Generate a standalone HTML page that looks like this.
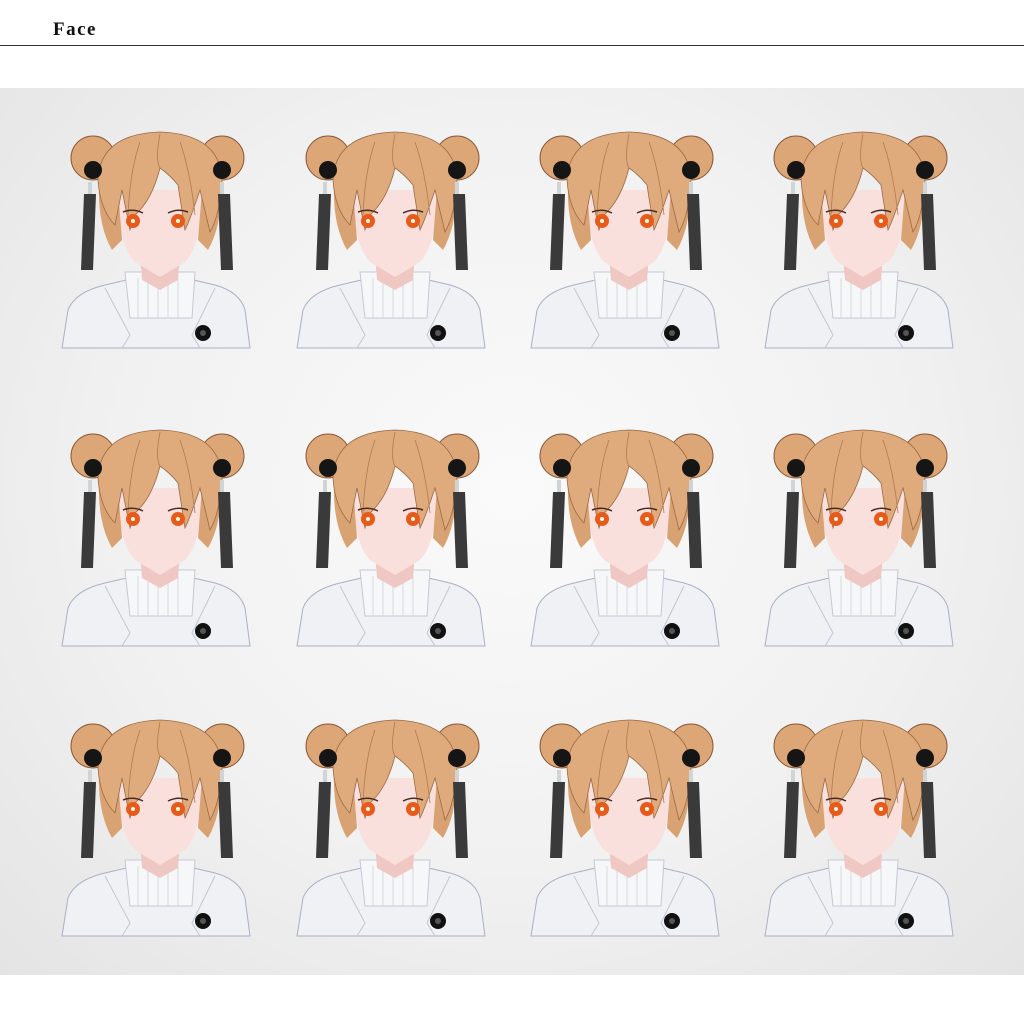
<!DOCTYPE html>
<html><head><meta charset="utf-8"><style>
body{margin:0;width:1024px;height:1024px;background:#fff;position:relative;overflow:hidden;font-family:"Liberation Serif",serif}
.h{position:absolute;left:53px;top:19px;font-weight:bold;font-size:19px;letter-spacing:1.5px;color:#111}
.line{position:absolute;left:0;top:45px;width:1024px;height:1px;background:#333}
.panel{position:absolute;left:0;top:88px;width:1024px;height:887px;background:radial-gradient(ellipse at 50% 45%,#fafafa 0%,#f1f1f1 55%,#e4e4e4 100%)}
svg{position:absolute;left:0;top:0}
</style></head><body>
<div class="h">Face</div><div class="line"></div><div class="panel"></div>
<svg width="1024" height="1024" viewBox="0 0 1024 1024">
<defs>
<g id="c">
 <path d="M2,228 L8,190 Q15,172 45,165 L75,158 L125,158 L155,165 Q180,172 185,190 L190,228 Z" fill="#f0f1f5" stroke="#aab0c4" stroke-width="1"/>
 <path d="M45,168 L70,215 L62,228 M155,168 L132,215 L140,228" fill="none" stroke="#c2c6d4" stroke-width="1"/>
 <path d="M65,152 L135,152 L132,198 L70,198 Z" fill="#f6f7f9" stroke="#c4c8d4" stroke-width="1"/>
 <path d="M78,158V198M88,158V198M98,158V198M108,158V198M118,158V198" stroke="#d6d8e0" stroke-width="1"/>
 <path d="M80,135 L120,135 L118,160 L100,170 L82,160 Z" fill="#efc8c4"/>
 <circle cx="143" cy="213" r="8" fill="#111"/><circle cx="143" cy="213" r="3" fill="#555"/>
 <path d="M58,70 Q58,125 75,142 L100,157 L125,142 Q142,125 142,70 Z" fill="#fae0dc"/>
 <path d="M40,50 Q35,100 52,130 L62,120 L58,70 Z M160,50 Q165,100 148,130 L138,120 L142,70 Z" fill="#d9a272"/>
 <circle cx="33" cy="38" r="22" fill="#dca676" stroke="#8a5a3a" stroke-width="1"/>
 <circle cx="162" cy="38" r="22" fill="#dca676" stroke="#8a5a3a" stroke-width="1"/>
 <path d="M38,60 Q40,14 100,12 Q160,14 162,60 Q160,95 150,112 L140,70 Q130,100 125,110 L118,65 Q110,55 100,48 Q92,80 75,95 L70,110 L62,70 L55,105 Q40,90 38,60 Z" fill="#e0ab7c" stroke="#9a6a45" stroke-width="0.8"/>
 <path d="M100,14 Q95,40 100,48 M80,22 Q70,50 68,95 M120,22 Q130,50 135,95" fill="none" stroke="#b07a50" stroke-width="0.8"/>
 <circle cx="33" cy="50" r="9" fill="#151515"/><circle cx="162" cy="50" r="9" fill="#151515"/>
 <rect x="28" y="62" width="4" height="12" fill="#cfd4d6"/><rect x="160" y="62" width="4" height="12" fill="#cfd4d6"/>
 <path d="M24,74 L36,74 L33,150 L21,150 Z" fill="#3a3a3a"/>
 <path d="M158,74 L170,74 L173,150 L161,150 Z" fill="#3a3a3a"/>
 <circle cx="73" cy="101" r="7" fill="#e85a1c"/><circle cx="73" cy="101" r="2" fill="#ffd"/>
 <circle cx="118" cy="101" r="7" fill="#e85a1c"/><circle cx="118" cy="101" r="2" fill="#ffd"/>
 <path d="M63,92 Q73,88 83,93 M108,93 Q118,88 128,92" stroke="#4a2a20" stroke-width="1.5" fill="none"/>
</g>
</defs>
<use href="#c" x="60" y="120"/><use href="#c" x="295" y="120"/><use href="#c" x="529" y="120"/><use href="#c" x="763" y="120"/>
<use href="#c" x="60" y="418"/><use href="#c" x="295" y="418"/><use href="#c" x="529" y="418"/><use href="#c" x="763" y="418"/>
<use href="#c" x="60" y="708"/><use href="#c" x="295" y="708"/><use href="#c" x="529" y="708"/><use href="#c" x="763" y="708"/>
</svg>
</body></html>
